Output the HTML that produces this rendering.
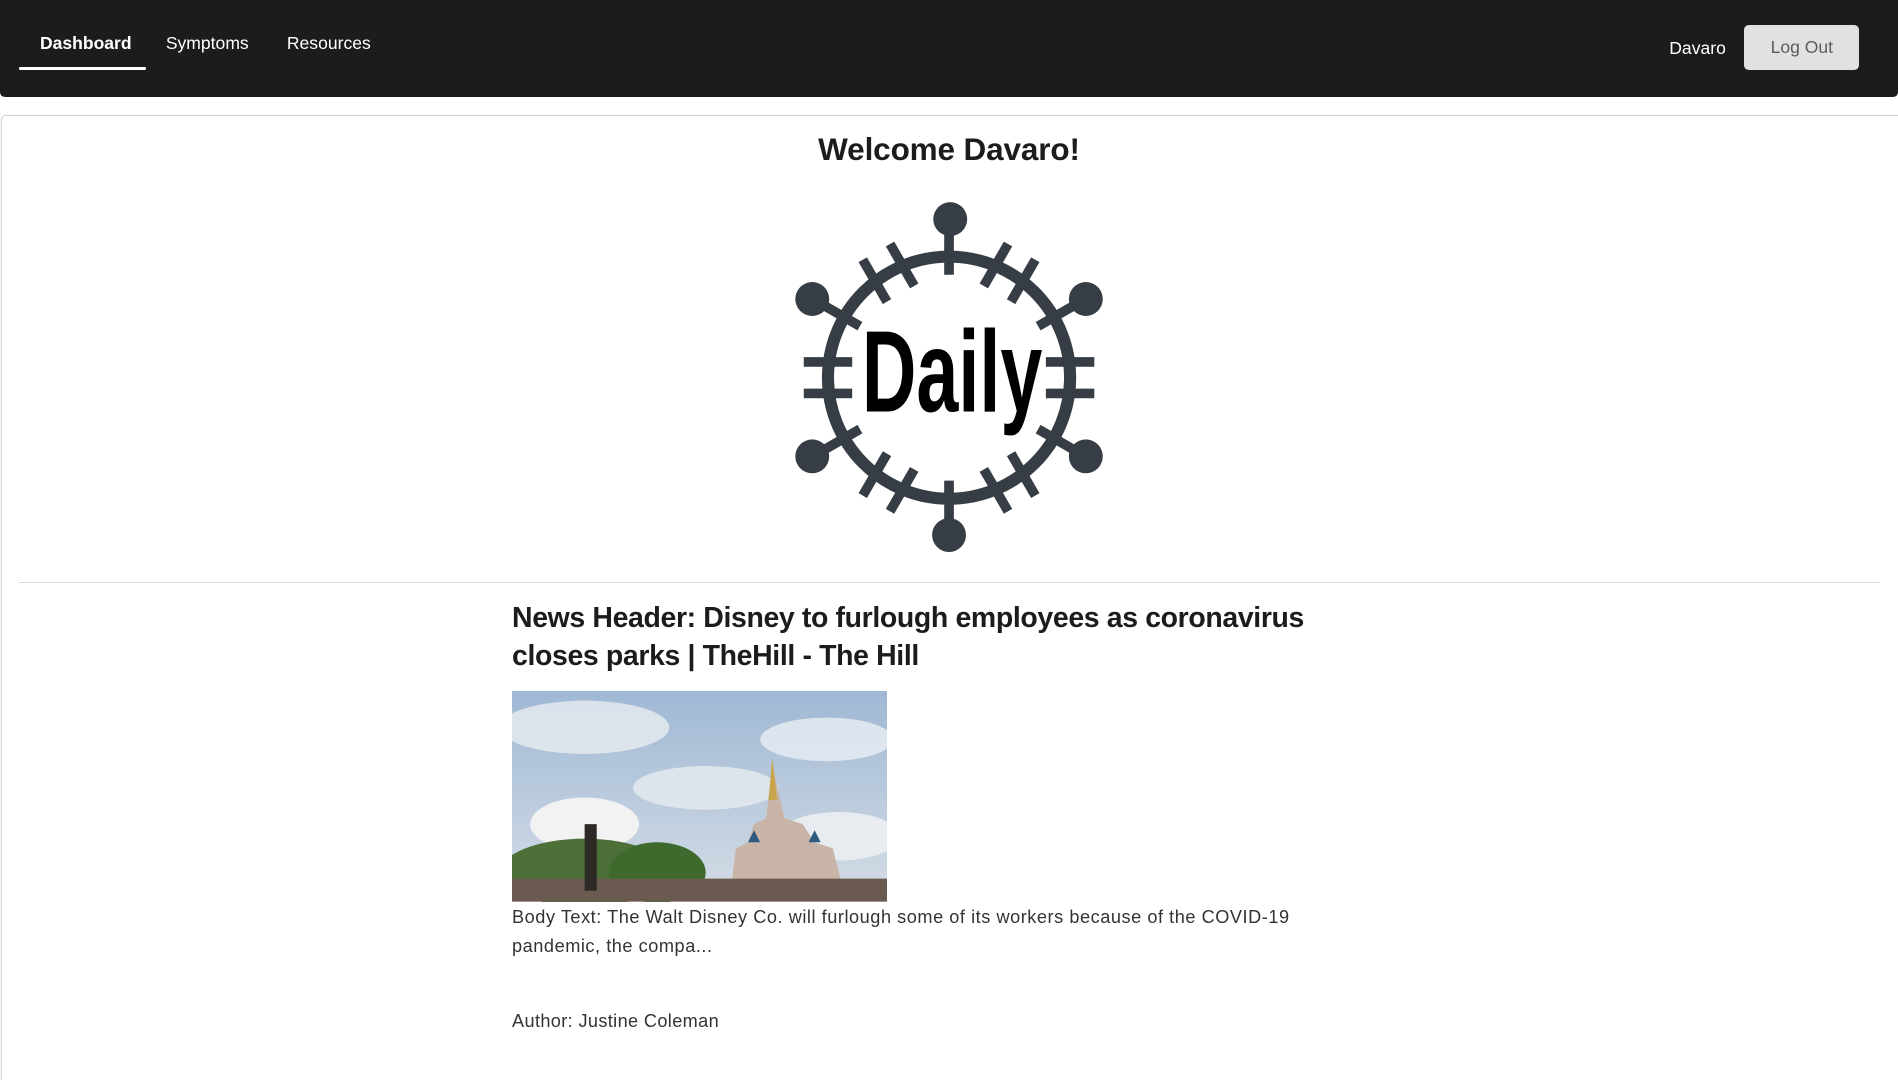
<!DOCTYPE html>
<html><head><meta charset="utf-8"><style>
html,body{margin:0;padding:0;background:#fff;overflow:hidden}
body{zoom:1.2105;width:1568px;height:892px;position:relative;font-family:"Liberation Sans",sans-serif;}
.nav{position:absolute;left:0;top:0;width:1568px;height:80px;background:#1b1c1d;border-radius:0 0 4px 4px}
.nav span{position:absolute;color:#fff;font-size:14.5px}
.ul{position:absolute;left:16px;top:55px;width:105px;height:3px;background:#fff;border-radius:1px}
.btn{position:absolute;left:1441px;top:21px;width:95px;height:37px;background:#e0e1e2;border-radius:4px;color:rgba(0,0,0,.6);font-size:14.5px;text-align:center;line-height:37px}
.seg{position:absolute;left:1px;top:95px;width:1580px;height:820px;border:1px solid #d4d4d5;border-radius:4px;box-shadow:0 1px 2px rgba(34,36,38,.15)}
h1{position:absolute;left:0;width:1568px;top:109px;margin:0;text-align:center;font-size:26px;font-weight:bold;color:#1b1c1d;letter-spacing:-0.1px}
.hr{position:absolute;left:16px;top:481px;width:1537px;height:1px;background:#dcdcdc}
.nh{position:absolute;left:423px;top:496px;white-space:nowrap;font-size:23.5px;font-weight:bold;line-height:31px;color:#1b1c1d;letter-spacing:-0.3px}
.img{position:absolute;left:423px;top:571px;width:310px;height:174px;overflow:hidden}
.bt{position:absolute;left:423px;top:746px;white-space:nowrap;font-size:15px;line-height:24px;color:#333;letter-spacing:0.45px}
.au{position:absolute;left:423px;top:835px;font-size:15px;color:#333;letter-spacing:0.3px}
</style></head><body>
<div class="nav">
<span style="left:33px;top:27px;font-weight:bold">Dashboard</span>
<div class="ul"></div>
<span style="left:137px;top:27px">Symptoms</span>
<span style="left:237px;top:27px">Resources</span>
<span style="left:1379px;top:31px">Davaro</span>
<div class="btn">Log Out</div>
</div>
<div class="seg"></div>
<h1>Welcome Davaro!</h1>
<svg style="position:absolute;left:0;top:0" width="1568" height="480">
<g fill="none" stroke="#363d44">
<circle cx="784" cy="312" r="100" stroke-width="10"/>
<g stroke-width="8">
<g transform="rotate(0 784 312)"><line x1="784" y1="227" x2="784" y2="185"/></g>
<g transform="rotate(60 784 312)"><line x1="784" y1="227" x2="784" y2="185"/></g>
<g transform="rotate(120 784 312)"><line x1="784" y1="227" x2="784" y2="185"/></g>
<g transform="rotate(180 784 312)"><line x1="784" y1="227" x2="784" y2="185"/></g>
<g transform="rotate(240 784 312)"><line x1="784" y1="227" x2="784" y2="185"/></g>
<g transform="rotate(300 784 312)"><line x1="784" y1="227" x2="784" y2="185"/></g>
</g>
<g stroke-width="8">
<g transform="rotate(30 784 312)"><line x1="771" y1="232" x2="771" y2="192"/><line x1="797" y1="232" x2="797" y2="192"/></g>
<g transform="rotate(90 784 312)"><line x1="771" y1="232" x2="771" y2="192"/><line x1="797" y1="232" x2="797" y2="192"/></g>
<g transform="rotate(150 784 312)"><line x1="771" y1="232" x2="771" y2="192"/><line x1="797" y1="232" x2="797" y2="192"/></g>
<g transform="rotate(210 784 312)"><line x1="771" y1="232" x2="771" y2="192"/><line x1="797" y1="232" x2="797" y2="192"/></g>
<g transform="rotate(270 784 312)"><line x1="771" y1="232" x2="771" y2="192"/><line x1="797" y1="232" x2="797" y2="192"/></g>
<g transform="rotate(330 784 312)"><line x1="771" y1="232" x2="771" y2="192"/><line x1="797" y1="232" x2="797" y2="192"/></g>
</g>
</g>
<g fill="#363d44">
<circle cx="785" cy="181" r="14"/><circle cx="784" cy="442" r="14"/>
<circle cx="671" cy="247" r="14"/><circle cx="897" cy="247" r="14"/>
<circle cx="671" cy="377" r="14"/><circle cx="897" cy="377" r="14"/>
</g>
<text x="0" y="340" font-family="Liberation Sans" font-weight="bold" font-size="96" fill="#000" transform="translate(712 0) scale(0.65 1)">Daily</text>
</svg>
<div class="hr"></div>
<div class="nh">News Header: Disney to furlough employees as coronavirus<br>closes parks | TheHill - The Hill</div>
<div class="img">
<svg width="310" height="174" viewBox="0 0 310 174">
<defs><linearGradient id="s" x1="0" y1="0" x2="0" y2="1"><stop offset="0" stop-color="#9fb8d4"/><stop offset="1" stop-color="#d5dde6"/></linearGradient></defs>
<rect width="310" height="174" fill="url(#s)"/>
<ellipse cx="60" cy="30" rx="70" ry="22" fill="#e8ecf0" opacity=".8"/>
<ellipse cx="60" cy="110" rx="45" ry="22" fill="#f2f2f2"/>
<ellipse cx="160" cy="80" rx="60" ry="18" fill="#e6ebf0" opacity=".8"/>
<ellipse cx="260" cy="40" rx="55" ry="18" fill="#e8edf2" opacity=".8"/>
<ellipse cx="270" cy="120" rx="50" ry="20" fill="#e8ecf0"/>
<ellipse cx="60" cy="150" rx="70" ry="28" fill="#4d7038"/>
<ellipse cx="120" cy="150" rx="40" ry="25" fill="#3f6a2e"/>
<polygon points="180,170 185,130 195,125 200,110 210,105 215,60 225,105 240,110 250,125 265,130 275,170" fill="#c9b4a8"/>
<polygon points="195,125 200,115 205,125" fill="#2e5a82"/>
<polygon points="245,125 250,115 255,125" fill="#2e5a82"/>
<polygon points="215,55 212,90 219,90" fill="#c9a64a"/>
<rect x="0" y="155" width="310" height="19" fill="#6b5a50"/>
<rect x="60" y="110" width="10" height="55" fill="#2d2a26"/>
</svg>
</div>
<div class="bt">Body Text: The Walt Disney Co. will furlough some of its workers because of the COVID-19<br>pandemic, the compa...</div>
<div class="au">Author: Justine Coleman</div>
</body></html>
